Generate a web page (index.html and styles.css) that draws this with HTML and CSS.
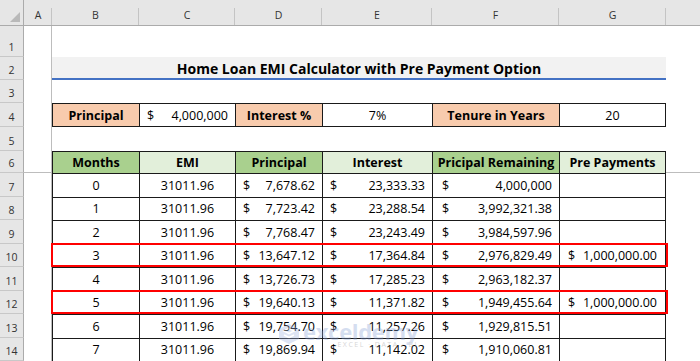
FILE: index.html
```html
<!DOCTYPE html>
<html>
<head>
<meta charset="utf-8">
<link rel="stylesheet" href="styles.css">
</head>
<body>
<div class="sheet">
  <div class="corner"><span class="tri"></span></div>
  <div class="colh">A</div><div class="colh">B</div><div class="colh">C</div><div class="colh">D</div><div class="colh">E</div><div class="colh">F</div><div class="colh">G</div><div class="colh rest"></div>

  <div class="rowh">1</div><div class="cell ca"></div><div class="cell span7"></div>

  <div class="rowh">2</div><div class="cell ca"></div><div class="cell title">Home Loan EMI Calculator with Pre Payment Option</div><div class="cell"></div>

  <div class="rowh">3</div><div class="cell ca"></div><div class="cell span7"></div>

  <div class="rowh">4</div><div class="cell ca"></div>
  <div class="cell t tb orange bold center">Principal</div>
  <div class="cell t tb acc"><span>$</span><span>4,000,000</span></div>
  <div class="cell t tb orange bold center">Interest %</div>
  <div class="cell t tb center">7%</div>
  <div class="cell t tb orange bold center">Tenure in Years</div>
  <div class="cell t tb tr center">20</div>
  <div class="cell"></div>

  <div class="rowh">5</div><div class="cell ca"></div><div class="cell span7"></div>

  <div class="rowh">6</div><div class="cell ca frz"></div>
  <div class="cell t dg bold center">Months</div>
  <div class="cell t lg bold center">EMI</div>
  <div class="cell t dg bold center">Principal</div>
  <div class="cell t lg bold center">Interest</div>
  <div class="cell t dg bold center">Pricipal Remaining</div>
  <div class="cell t tr lg bold center">Pre Payments</div>
  <div class="cell frz"></div>

  <div class="rowh">7</div><div class="cell ca"></div>
  <div class="cell t center">0</div><div class="cell t center">31011.96</div>
  <div class="cell t acc"><span>$</span><span>7,678.62</span></div>
  <div class="cell t acc"><span>$</span><span>23,333.33</span></div>
  <div class="cell t acc f"><span>$</span><span>4,000,000</span></div>
  <div class="cell t tr"></div><div class="cell"></div>

  <div class="rowh">8</div><div class="cell ca"></div>
  <div class="cell t center">1</div><div class="cell t center">31011.96</div>
  <div class="cell t acc"><span>$</span><span>7,723.42</span></div>
  <div class="cell t acc"><span>$</span><span>23,288.54</span></div>
  <div class="cell t acc f"><span>$</span><span>3,992,321.38</span></div>
  <div class="cell t tr"></div><div class="cell"></div>

  <div class="rowh">9</div><div class="cell ca"></div>
  <div class="cell t center">2</div><div class="cell t center">31011.96</div>
  <div class="cell t acc"><span>$</span><span>7,768.47</span></div>
  <div class="cell t acc"><span>$</span><span>23,243.49</span></div>
  <div class="cell t acc f"><span>$</span><span>3,984,597.96</span></div>
  <div class="cell t tr"></div><div class="cell"></div>

  <div class="rowh">10</div><div class="cell ca"></div>
  <div class="cell t center">3</div><div class="cell t center">31011.96</div>
  <div class="cell t acc"><span>$</span><span>13,647.12</span></div>
  <div class="cell t acc"><span>$</span><span>17,364.84</span></div>
  <div class="cell t acc f"><span>$</span><span>2,976,829.49</span></div>
  <div class="cell t tr acc g"><span>$</span><span>1,000,000.00</span></div><div class="cell"></div>

  <div class="rowh">11</div><div class="cell ca"></div>
  <div class="cell t center">4</div><div class="cell t center">31011.96</div>
  <div class="cell t acc"><span>$</span><span>13,726.73</span></div>
  <div class="cell t acc"><span>$</span><span>17,285.23</span></div>
  <div class="cell t acc f"><span>$</span><span>2,963,182.37</span></div>
  <div class="cell t tr"></div><div class="cell"></div>

  <div class="rowh">12</div><div class="cell ca"></div>
  <div class="cell t center">5</div><div class="cell t center">31011.96</div>
  <div class="cell t acc"><span>$</span><span>19,640.13</span></div>
  <div class="cell t acc"><span>$</span><span>11,371.82</span></div>
  <div class="cell t acc f"><span>$</span><span>1,949,455.64</span></div>
  <div class="cell t tr acc g"><span>$</span><span>1,000,000.00</span></div><div class="cell"></div>

  <div class="rowh">13</div><div class="cell ca"></div>
  <div class="cell t center">6</div><div class="cell t center">31011.96</div>
  <div class="cell t acc"><span>$</span><span>19,754.70</span></div>
  <div class="cell t acc"><span>$</span><span>11,257.26</span></div>
  <div class="cell t acc f"><span>$</span><span>1,929,815.51</span></div>
  <div class="cell t tr"></div><div class="cell"></div>

  <div class="rowh">14</div><div class="cell ca"></div>
  <div class="cell t center">7</div><div class="cell t center">31011.96</div>
  <div class="cell t acc"><span>$</span><span>19,869.94</span></div>
  <div class="cell t acc"><span>$</span><span>11,142.02</span></div>
  <div class="cell t acc f"><span>$</span><span>1,910,060.81</span></div>
  <div class="cell t tr"></div><div class="cell"></div>

  <div class="hl hl1"></div>
  <div class="hl hl2"></div>

  <div class="wm">
    <svg class="wm-icon" width="24" height="22" viewBox="0 0 24 22"><path d="M12 1 L22 6 L22 16 L12 21 L2 16 L2 6 Z" fill="#9fb3e0"/><path d="M7 8 L12 5.5 L17 8 L12 10.5 Z M7 12 L12 14.5 L17 12" fill="none" stroke="#fff" stroke-width="1.6"/></svg>
    <div class="wm-text">
      <div class="wm-name">exceldemy</div>
      <div class="wm-sub">EXCEL · DATA · BI</div>
    </div>
  </div>
</div>
</body>
</html>
```

FILE: styles.css
```css
html, body {
  margin: 0;
  padding: 0;
  background: #fff;
  overflow: hidden;
}

.sheet {
  position: relative;
  width: 700px;
  height: 361px;
  display: grid;
  grid-template-columns: 24px 28px 87px 96px 87px 110px 127px 107px 34px;
  grid-template-rows: 26px 31px 23px 23px 24px 24px 22px repeat(8, 23.5px);
  font-family: "Open Sans", "Liberation Sans", sans-serif;
  font-size: 12.5px;
  color: #000;
}

.corner {
  position: relative;
  background: #e6e6e6;
  border-right: 1px solid #ababab;
  border-bottom: 1px solid #ababab;
}

.tri {
  position: absolute;
  right: 3px;
  bottom: 3px;
  width: 0;
  height: 0;
  border-left: 10px solid transparent;
  border-bottom: 10px solid #b9b9b9;
}

.colh {
  background: linear-gradient(#c4c4c4, #c4c4c4) right 0 bottom 0 / 1px 17px no-repeat, #e6e6e6;
  border-bottom: 1px solid #ababab;
  display: flex;
  align-items: flex-end;
  justify-content: center;
  padding-bottom: 3px;
  box-sizing: border-box;
  font-size: 10.5px;
  color: #333;
}

.colh.rest {
  background: #e6e6e6;
}

.rowh {
  background: #e6e6e6;
  border-right: 1px solid #ababab;
  border-bottom: 1px solid #c8c8c8;
  box-sizing: border-box;
  display: flex;
  align-items: flex-end;
  justify-content: center;
  padding-bottom: 2px;
  font-size: 10.5px;
  color: #333;
}

.cell {
  box-sizing: border-box;
  display: flex;
  align-items: center;
  padding: 0 7px;
  white-space: nowrap;
  overflow: hidden;
}

.ca {
  border-right: 1px solid #bdbdbd;
}

.span7 {
  grid-column: span 7;
}

.title {
  grid-column: span 6;
  justify-content: center;
  background: #f2f2f2;
  border-bottom: 2px solid #4472c4;
  font-weight: 700;
  font-size: 14px;
  padding-top: 1px;
}

.frz {
  border-bottom: 1px solid #bdbdbd;
}

.t {
  border-left: 1px solid #1a1a1a;
  border-top: 1px solid #1a1a1a;
}

.tb {
  border-bottom: 1px solid #1a1a1a;
}

.tr {
  border-right: 1px solid #1a1a1a;
}

.center {
  justify-content: center;
}

.bold {
  font-weight: 700;
}

.orange {
  background: #f8cbad;
}

.dg {
  background: #a9d08e;
}

.lg {
  background: #e2efda;
}

.acc {
  justify-content: space-between;
}

.acc.f {
  padding-left: 9px;
}

.acc.g {
  padding-left: 8px;
  padding-right: 8px;
}

.hl {
  position: absolute;
  left: 51px;
  width: 617px;
  height: 24px;
  border: 2px solid #ff0000;
  box-sizing: border-box;
}

.hl1 {
  top: 243px;
}

.hl2 {
  top: 290px;
}

.wm {
  position: absolute;
  left: 277px;
  top: 321px;
  display: flex;
  align-items: flex-start;
  gap: 2px;
  opacity: 0.35;
  pointer-events: none;
}

.wm-icon {
  margin-top: 2px;
}

.wm-text {
  display: flex;
  flex-direction: column;
  align-items: flex-end;
}

.wm-name {
  font-family: "Open Sans", sans-serif;
  font-weight: 700;
  font-size: 22px;
  line-height: 20px;
  color: #8aa2d6;
  letter-spacing: -0.3px;
}

.wm-sub {
  font-family: "Open Sans", sans-serif;
  font-size: 7px;
  line-height: 8px;
  letter-spacing: 1.5px;
  color: #8a8a8a;
}
```
